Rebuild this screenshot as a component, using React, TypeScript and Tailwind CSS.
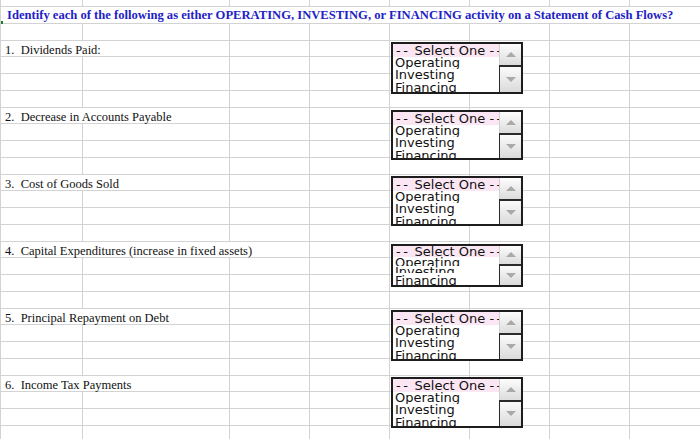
import React from 'react';

// column widths of the sheet (last one runs off the page)
const COL_W = ['w-[82px]', 'w-[147px]', 'w-[80px]', 'w-[80px]', 'w-[80px]', 'w-[80px]', 'w-[80px]', 'w-[80px]'];
// width of a first cell that spans n columns
const SPAN_W: Record<number, string> = { 1: 'w-[82px]', 2: 'w-[229px]', 3: 'w-[309px]', 8: 'w-[709px]' };

type Item = { row: number; label: string; span: number; box: string; tall: boolean };

const ITEMS: Item[] = [
  { row: 2, label: '1.  Dividends Paid:', span: 2, box: 'top-[1px] h-[52px]', tall: true },
  { row: 6, label: '2.  Decrease in Accounts Payable', span: 2, box: 'top-[2px] h-[50px]', tall: true },
  { row: 10, label: '3.  Cost of Goods Sold', span: 2, box: 'top-[1px] h-[50px]', tall: true },
  { row: 14, label: '4.  Capital Expenditures (increase in fixed assets)', span: 3, box: 'top-[2px] h-[43px]', tall: false },
  { row: 18, label: '5.  Principal Repayment on Debt', span: 2, box: 'top-[1px] h-[51px]', tall: true },
  { row: 22, label: '6.  Income Tax Payments', span: 2, box: 'top-[1px] h-[51px]', tall: true },
];

const LINE = 'border-[#d3d3d3]';

const Triangle = ({ up }: { up: boolean }) => (
  <div
    className={
      up
        ? 'w-0 h-0 border-x-[5px] border-x-transparent border-b-[5px] border-b-[#a9a9a9]'
        : 'w-0 h-0 border-x-[5px] border-x-transparent border-t-[5px] border-t-[#a9a9a9]'
    }
  />
);

const ListBox = ({ box, tall }: { box: string; tall: boolean }) => (
  <div className={`absolute left-[1px] z-10 w-[132px] border-2 border-[#1d1d1d] bg-white flex overflow-hidden ${box}`}>
    <div className="flex-1 min-w-0 flex flex-col overflow-hidden font-['DejaVu_Sans',sans-serif] text-[13px] text-[#111] whitespace-nowrap">
      <div
        className={`shrink-0 bg-[#fbe7f4] pl-[3px] overflow-hidden ${
          tall ? 'h-[13px] leading-[13px]' : 'h-[11px] leading-[11px]'
        }`}
      >
        <span className="tracking-[2.5px]">--</span> Select One <span className="tracking-[2.5px]">--</span>
      </div>
      <div className={`shrink-0 pl-[2px] overflow-hidden ${tall ? 'h-[12.5px] leading-[12px]' : 'h-[9px] leading-[11px]'}`}>
        Operating
      </div>
      <div className={`shrink-0 pl-[2px] overflow-hidden ${tall ? 'h-[12.5px] leading-[12px]' : 'h-[7px] leading-[11px]'}`}>
        Investing
      </div>
      <div className={`flex-1 pl-[2px] overflow-hidden ${tall ? 'leading-[12px]' : 'pt-[2px] leading-[11px]'}`}>Financing</div>
    </div>
    <div className="w-[22px] shrink-0 flex flex-col bg-[#f1f1f1]">
      <div
        className={`shrink-0 border-l border-[#cfcfcf] bg-gradient-to-b from-[#fdfdfd] to-[#dcdcdc] flex items-center justify-center ${
          tall ? 'h-[21px]' : 'h-[18px]'
        }`}
      >
        <Triangle up />
      </div>
      <div className="flex-1 border-t-2 border-l border-[#2a2a2a] bg-gradient-to-b from-[#fbfbfb] to-[#dadada] flex items-center justify-center">
        <Triangle up={false} />
      </div>
    </div>
  </div>
);

const Row = ({ index }: { index: number }) => {
  const base = `h-[16.76px] shrink-0 flex border-b ${LINE}`;

  if (index === 0) {
    return (
      <div className={`${base} relative`}>
        <div className="absolute left-0 top-[14px] w-[2px] h-[3px] bg-[#1f7a3a]" />
        <div className="w-[709px] shrink-0 pl-[6px] pt-[2px] flex items-center whitespace-nowrap font-['Liberation_Serif',serif] font-bold text-[12.6px] text-[#2222c6]">
          Identify each of the following as either OPERATING, INVESTING, or FINANCING activity on a Statement of Cash Flows?
        </div>
      </div>
    );
  }

  const item = ITEMS.find((it) => it.row === index);
  if (!item) {
    return (
      <div className={base}>
        {COL_W.map((w, i) => (
          <div key={i} className={`${w} shrink-0 h-full border-r ${LINE}`} />
        ))}
      </div>
    );
  }

  return (
    <div className={base}>
      <div
        className={`${SPAN_W[item.span]} shrink-0 h-full border-r ${LINE} pl-[4px] flex items-end leading-[12px] whitespace-pre font-['Liberation_Serif',serif] text-[12.5px] text-[#111]`}
      >
        {item.label}
      </div>
      {COL_W.slice(item.span).map((w, i) => (
        <div key={i} className={`${w} shrink-0 h-full border-r ${LINE} relative`}>
          {i + item.span === 4 && <ListBox box={item.box} tall={item.tall} />}
        </div>
      ))}
    </div>
  );
};

export default function App() {
  return (
    <div className="w-[700px] h-[439px] overflow-hidden bg-white">
      <div className={`w-[709px] flex flex-col border-l ${LINE}`}>
        <div className={`h-[7px] shrink-0 flex border-b ${LINE}`}>
          {COL_W.map((w, i) => (
            <div key={i} className={`${w} shrink-0 h-full border-r ${LINE}`} />
          ))}
        </div>
        {Array.from({ length: 26 }, (_, i) => (
          <Row key={i} index={i} />
        ))}
      </div>
    </div>
  );
}
